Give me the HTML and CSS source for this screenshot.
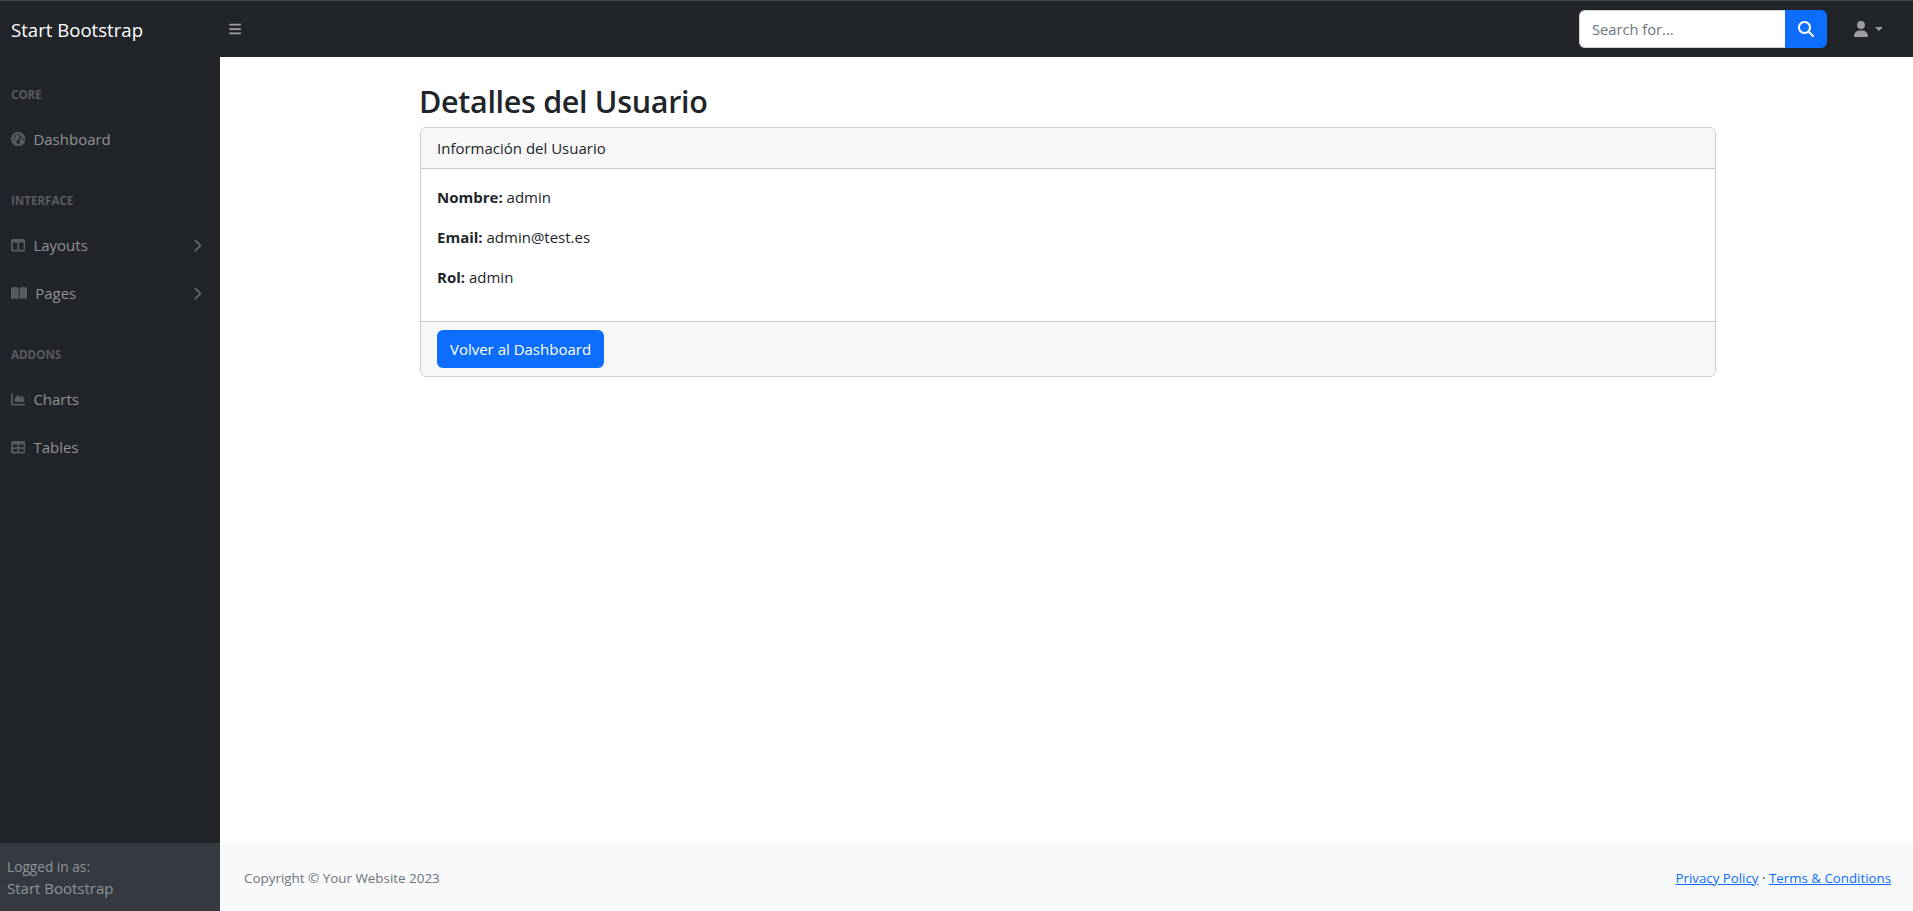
FILE: index.html
```
<!DOCTYPE html>
<html lang="es">
<head>
<meta charset="utf-8">
<title>Detalles del Usuario</title>
<link rel="stylesheet" href="styles.css">
</head>
<body>
<nav class="topnav">
  <a class="brand">Start Bootstrap</a>
  <button class="toggle" aria-label="Menu"><svg viewBox="0 0 448 512"><path d="M0 96C0 78.300 14.300 64 32 64H416c17.700 0 32 14.300 32 32s-14.300 32-32 32H32C14.300 128 0 113.700 0 96zM0 256c0-17.700 14.300-32 32-32H416c17.700 0 32 14.300 32 32s-14.300 32-32 32H32c-17.700 0-32-14.300-32-32zM448 416c0 17.700-14.300 32-32 32H32c-17.700 0-32-14.300-32-32s14.300-32 32-32H416c17.700 0 32 14.300 32 32z"/></svg></button>
  <form class="search">
    <input type="text" placeholder="Search for...">
    <button type="button" aria-label="Search"><svg viewBox="0 0 512 512"><path d="M416 208c0 45.9-14.9 88.3-40 122.7L502.6 457.4c12.5 12.5 12.5 32.8 0 45.3s-32.8 12.5-45.3 0L330.7 376c-34.4 25.2-76.8 40-122.7 40C93.1 416 0 322.9 0 208S93.1 0 208 0S416 93.1 416 208zM208 352a144 144 0 1 0 0-288 144 144 0 1 0 0 288z"/></svg></button>
  </form>
  <a class="user"><svg viewBox="0 0 448 512"><path d="M224 256A128 128 0 1 0 224 0a128 128 0 1 0 0 256zm-45.7 48C79.8 304 0 383.800 0 482.300C0 498.700 13.300 512 29.700 512H418.300c16.400 0 29.700-13.300 29.700-29.700C448 383.800 368.200 304 269.700 304H178.300z"/></svg><span class="caret"></span></a>
</nav>
<div class="layout">
  <aside class="sidebar">
    <div class="menu">
      <div class="heading">CORE</div>
      <a class="link"><svg class="icon" viewBox="0 0 512 512"><path fill-rule="evenodd" d="M0 256a256 256 0 1 1 512 0A256 256 0 1 1 0 256zM288 96a32 32 0 1 0 -64 0 32 32 0 1 0 64 0zM256 416c35.3 0 64-28.700 64-64c0-17.400-6.900-33.100-18.100-44.600L366 161.700c5.300-12.100-.2-26.300-12.300-31.600s-26.300 .2-31.600 12.300L257.900 288c-.6 0-1.300 0-1.900 0c-35.300 0-64 28.700-64 64s28.700 64 64 64zM176 144a32 32 0 1 0 -64 0 32 32 0 1 0 64 0zM96 288a32 32 0 1 0 0-64 32 32 0 1 0 0 64zm352-32a32 32 0 1 0 -64 0 32 32 0 1 0 64 0z"/></svg>Dashboard</a>
      <div class="heading">INTERFACE</div>
      <a class="link"><svg class="icon" viewBox="0 0 512 512"><path fill-rule="evenodd" d="M0 96C0 60.700 28.700 32 64 32H448c35.300 0 64 28.700 64 64V416c0 35.300-28.700 64-64 64H64c-35.300 0-64-28.700-64-64V96zm64 64V416H224V160H64zm384 0H288V416H448V160z"/></svg>Layouts<svg class="arrow" viewBox="0 0 8 13"><path d="M1.300 1.300 6.500 6.500 1.300 11.700"/></svg></a>
      <a class="link"><svg class="icon wide" viewBox="0 0 576 512"><path d="M249.600 471.500c10.800 3.800 22.400-4.100 22.400-15.500V78.600c0-4.200-1.600-8.400-5-11C247.400 52 202.400 32 144 32C93.500 32 46.300 45.300 18.100 56.100C6.800 60.500 0 71.700 0 83.800V454.100c0 11.900 12.800 20.200 24.100 16.500C55.600 460.100 105.500 448 144 448c33.900 0 79 14 105.600 23.500zm76.800 0C353 462 398.100 448 432 448c38.500 0 88.400 12.100 119.900 22.600c11.300 3.800 24.100-4.600 24.100-16.500V83.800c0-12.100-6.800-23.300-18.100-27.600C529.700 45.300 482.500 32 432 32c-58.400 0-103.400 20-123 35.600c-3.300 2.600-5 6.800-5 11V456c0 11.400 11.700 19.300 22.400 15.500z"/></svg>Pages<svg class="arrow" viewBox="0 0 8 13"><path d="M1.300 1.300 6.500 6.500 1.300 11.700"/></svg></a>
      <div class="heading">ADDONS</div>
      <a class="link"><svg class="icon" viewBox="0 0 512 512"><path d="M64 64c0-17.700-14.300-32-32-32S0 46.300 0 64V400c0 44.200 35.800 80 80 80H480c17.700 0 32-14.300 32-32s-14.300-32-32-32H80c-8.800 0-16-7.200-16-16V64zm96 288H448c17.700 0 32-14.300 32-32V251.800c0-7.600-2.700-15-7.700-20.800l-65.800-76.800c-12.100-14.200-33.700-15-46.900-1.800l-21 21c-10 10-26.400 9.200-35.400-1.600l-39.200-47c-12.600-15.100-35.700-15.400-48.700-.6L135.900 215c-5.100 5.800-7.900 13.300-7.900 21.100v84c0 17.700 14.300 32 32 32z"/></svg>Charts</a>
      <a class="link"><svg class="icon" viewBox="0 0 512 512"><path fill-rule="evenodd" d="M64 256V160H224v96H64zm0 64H224v96H64V320zm224 96V320H448v96H288zM448 256H288V160H448v96zM64 32C28.700 32 0 60.700 0 96V416c0 35.300 28.700 64 64 64H448c35.300 0 64-28.700 64-64V96c0-35.300-28.700-64-64-64H64z"/></svg>Tables</a>
    </div>
    <div class="session">
      <div class="small">Logged in as:</div>
      <div>Start Bootstrap</div>
    </div>
  </aside>
  <div class="content">
    <main>
      <h1>Detalles del Usuario</h1>
      <section class="card">
        <header>Información del Usuario</header>
        <div class="card-body">
          <p><strong>Nombre:</strong> admin</p>
          <p><strong>Email:</strong> admin@test.es</p>
          <p><strong>Rol:</strong> admin</p>
        </div>
        <footer><a class="btn">Volver al Dashboard</a></footer>
      </section>
    </main>
    <footer class="page-footer">
      <div class="copyright">Copyright © Your Website 2023</div>
      <div class="legal"><a href="#">Privacy Policy</a> · <a href="#">Terms &amp; Conditions</a></div>
    </footer>
  </div>
</div>
</body>
</html>
```
FILE: styles.css
```
* { box-sizing: border-box; }
body {
  margin: 0;
  height: 100vh;
  overflow: hidden;
  display: flex;
  flex-direction: column;
  font: 15px/24px "Open Sans", "Noto Sans", sans-serif;
  color: #212529;
  background: #fff;
}
svg { display: block; fill: currentColor; }
button { border: 0; background: none; padding: 0; font: inherit; }

.topnav {
  flex: none;
  height: 57px;
  border-top: 1px solid #454a49;
  background: #212529;
  display: flex;
  align-items: center;
}
.brand {
  width: 229px;
  padding: 2px 0 0 11px;
  font-size: 18.6px;
  line-height: 30px;
  color: #fff;
}
.toggle { color: #9b9d9e; }
.toggle svg { width: 12.25px; height: 14px; }
.search { display: flex; margin-left: auto; height: 38px; }
.search input {
  width: 206px;
  padding: 0 12px;
  border: 1px solid #ced4da;
  border-right: 0;
  border-radius: 6px 0 0 6px;
  font: 14.7px "Open Sans", sans-serif;
  color: #212529;
  background: #fff;
}
.search input::placeholder { color: #6c757d; opacity: 1; }
.search button {
  width: 42px;
  display: flex;
  align-items: center;
  justify-content: center;
  border-radius: 0 6px 6px 0;
  background: #0d6efd;
  color: #fff;
}
.search svg { width: 16px; height: 16px; }
.user {
  display: flex;
  align-items: center;
  gap: 7px;
  margin: 0 30px 0 27px;
  color: #9b9d9e;
}
.user svg { width: 14px; height: 16px; }
.caret { border: 4.3px solid transparent; border-top-color: currentColor; border-bottom: 0; }

.layout { flex: 1; min-height: 0; display: flex; }
.sidebar {
  width: 220px;
  flex: none;
  display: flex;
  flex-direction: column;
  background: #212529;
  color: #909294;
}
.menu { flex: 1; }
.heading {
  height: 58px;
  padding: 29px 11px 0;
  font-size: 11.6px;
  font-weight: 700;
  line-height: 18px;
  color: #585b5e;
}
.link { display: flex; align-items: center; height: 48px; padding: 0 18px 0 11px; }
.icon { width: 14.4px; height: 14.4px; margin-right: 8px; color: #585b5e; }
.icon.wide { width: 16.2px; }
.arrow { width: 8px; height: 13px; margin-left: auto; fill: none; stroke: #636669; stroke-width: 1.8; stroke-linecap: round; stroke-linejoin: round; }
.session { height: 68px; padding: 13px 7px 0; background: #343a40; color: #909498; line-height: 22px; }
.small { font-size: 13.7px; line-height: 21px; }

.content { flex: 1; display: flex; flex-direction: column; }
main { flex: 1; width: 1296px; margin-left: 200px; padding-top: 25px; }
h1 { margin: 0 0 7px -1px; font-size: 30.5px; font-weight: 560; line-height: 38px; letter-spacing: -.32px; }
.card { border: 1px solid #cfcfcf; border-radius: 6px; overflow: hidden; }
.card > header { padding: 8px 16px; border-bottom: 1px solid #c8c8c8; background: #f7f7f7; }
.card-body { padding: 16px; }
.card-body p { margin: 0 0 16px; }
.card > footer { display: flex; padding: 8px 16px; border-top: 1px solid #c8c8c8; background: #f7f7f7; }
.btn {
  width: 167px;
  height: 38px;
  border-radius: 6px;
  background: #0d6efd;
  color: #fff;
  line-height: 38px;
  text-align: center;
}
.page-footer {
  height: 68px;
  padding: 2px 22px 0 24px;
  display: flex;
  align-items: center;
  justify-content: space-between;
  background: #f8f9fa;
  font-size: 13.3px;
  line-height: 21px;
  color: #6c757d;
}
.copyright { font-size: 13.42px; }
.legal { color: #212529; }
.legal a { color: #0d6efd; text-underline-offset: 1px; }
```
